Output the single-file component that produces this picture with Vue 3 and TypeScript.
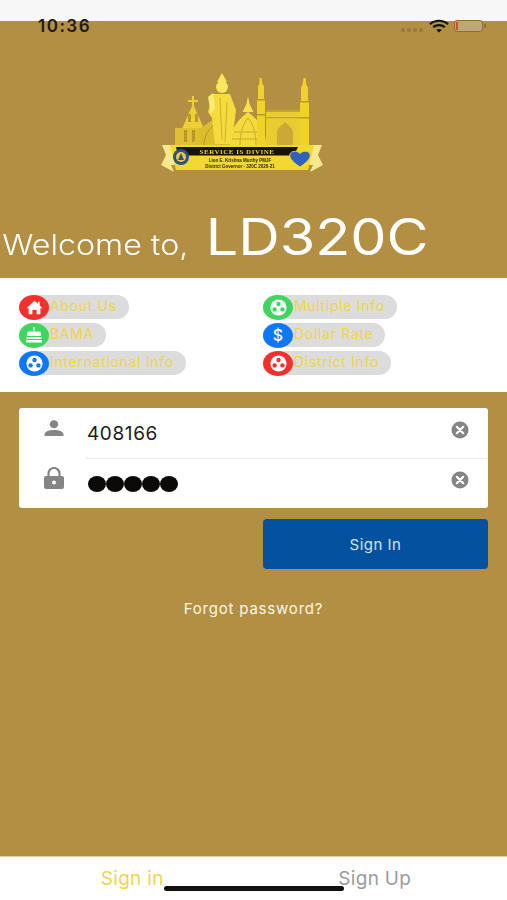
<template>
  <div class="screen">
    <div class="status-strip"></div>

    <!-- status bar sits over the strip and the gold header -->
    <div class="status-bar">
      <span class="time">10:36</span>
      <div class="status-icons">
        <div class="signal"><i v-for="n in 4" :key="n"></i></div>
        <svg class="wifi" viewBox="0 0 20 14" width="20" height="14">
          <path d="M1 5.200C6 .6 14 .6 19 5.200" fill="none" stroke="#111" stroke-width="2.200" />
          <path d="M4.200 8.200c3.300-2.900 8.300-2.900 11.600 0" fill="none" stroke="#111" stroke-width="2.200" />
          <path d="M7.200 10.800c1.600-1.200 4-1.200 5.600 0L10 13.600z" fill="#111" />
        </svg>
        <div class="battery"><b></b></div>
        <div class="battery-cap"></div>
      </div>
    </div>

    <header class="hero">
      <svg class="logo" viewBox="0 0 200 130" width="200" height="130">
        <g fill="#f0d32a">
          <!-- left church -->
          <path d="M52 36h2v4h4v2h-4v4l14 32H38l14-32v-4h-4v-2h4z" fill="#ecd035" />
          <path d="M35 86V68h34v18z" fill="#dfc030" />
          <path d="M48 54h3v8h-3zM55 54h3v8h-3zM44 70h3v12h-3zM52 70h3v12h-3z" fill="#b8982c" />
          <!-- right mosque -->
          <path d="M126 50h36v36h-36z" fill="#e9cc30" />
          <path d="M126 50h36v2h-36zM126 57h36v1.200h-36z" fill="#c2a42c" />
          <path d="M137 86V73c0-5 5-8 8-11 3 3 8 6 8 11v13z" fill="#b8913f" opacity=".6" />
          <!-- domes -->
          <path d="M54 86c0-13 8-20 19-26 11 6 19 13 19 26z" fill="#dcbd2c" />
          <path d="M64 86c0-10 4-16 9-20M82 86c0-10-4-16-9-20" fill="none" stroke="#b39429" />
          <path d="M90 86c0-18 8-26 18-34 10 8 18 16 18 34z" fill="#f4da3a" />
          <path d="M100 86c0-14 3-22 8-28M116 86c0-14-3-22-8-28M94 72h28M92 79h32" fill="none" stroke="#c9aa2c" />
          <path d="M108 36l1.500 8 4 8h-11l4-8z" fill="#f7e34f" />
          <!-- statue -->
          <circle cx="82" cy="27" r="6" fill="#f9e75c" />
          <path d="M77 22l5-9 5 9z" fill="#f9e75c" />
          <path d="M73 34h17l6 16-2 16-3 18H75l-3-26-4-6z" fill="#f5dc3c" />
          <path d="M68 37l5-4 2 14-4 8z" fill="#fbec74" />
          <path d="M80 38l2 42M87 42l-2 40" fill="none" stroke="#cdae2c" />
          <!-- minarets -->
          <path d="M119.500 18h2l1 6 1.500 2v12l1 2v46h-8V40l1-2V26l1.500-2z" />
          <path d="M117 39h8v1.500h-8zM117 54h8v1.500h-8z" fill="#b8982c" />
          <path d="M163.500 18h2l1 7 1.500 2v13l1 2v44h-9V42l1-2V27l1.500-2z" />
          <path d="M160 41h9v1.500h-9zM160 57h9v1.500h-9z" fill="#b8982c" />
        </g>
        <!-- banner -->
        <path d="M22 85l13 0v20H31l3 7-13-7 5-10z" fill="#f7e88c" />
        <path d="M182 85l-13 0v20h4l-3 7 13-7-5-10z" fill="#f7e88c" />
        <path d="M30 85h144l-6 25H36z" fill="#f3d92f" />
        <path d="M36 87h122l-4 8.500H38z" fill="#17130a" />
        <text x="97" y="94" class="banner-title" text-anchor="middle">SERVICE IS DIVINE</text>
        <text x="100" y="101.500" class="banner-sub" text-anchor="middle">Lion E. Krishna Murthy PMJF</text>
        <text x="100" y="108" class="banner-sub" text-anchor="middle">District Governor · 320C 2020-21</text>
        <circle cx="41" cy="97" r="8" fill="#2c4f8f" />
        <circle cx="41" cy="97" r="5" fill="#e8cd3a" />
        <path d="M41 93l3 7h-6z" fill="#2c4f8f" />
        <path d="M160 107c-9-6-11-10-10-13 1-3 7-4 10-.5 3-3.500 9-2.500 10 .5 1 3-1 7-10 13z" fill="#2f62b8" stroke="#e8cd3a" />
      </svg>
      <h1 class="welcome">
        <span class="welcome-to">Welcome to,</span>
        <span class="welcome-name">LD320C</span>
      </h1>
    </header>

    <section class="links">
      <div v-for="link in links" :key="link.label" class="pill">
        <span class="pill-icon" :class="link.color">
          <svg v-if="link.icon === 'home'" viewBox="0 0 20 20" width="19" height="19">
            <path d="M10 3l3.500 3V4h2v4l3 2.800h-2.300V17h-4v-4.500H7.800V17h-4v-6.200H1.500z" fill="#fff" />
          </svg>
          <svg v-else-if="link.icon === 'cake'" viewBox="0 0 20 20" width="20" height="20">
            <path d="M9.200 2h1.600v3.500h-1.600z" fill="#fff" />
            <path d="M5 6.500h10a2 2 0 0 1 2 2V11H3V8.500a2 2 0 0 1 2-2z" fill="#fff" />
            <path d="M2.500 12h15v2H2.500zM2 15h16v2.500H2z" fill="#fff" />
          </svg>
          <span v-else-if="link.icon === 'dollar'" class="dollar">$</span>
          <svg v-else viewBox="0 0 20 20" width="19" height="19">
            <circle cx="10" cy="10" r="8.500" fill="#fff" />
            <circle cx="10" cy="6.300" r="2.300" :class="'dot-' + link.color" />
            <circle cx="5.900" cy="12" r="2.300" :class="'dot-' + link.color" />
            <circle cx="14.100" cy="12" r="2.300" :class="'dot-' + link.color" />
          </svg>
        </span>
        <span class="pill-text">{{ link.label }}</span>
      </div>
    </section>

    <main class="body">
      <form class="card" @submit.prevent>
        <div class="field">
          <svg class="field-icon" viewBox="0 0 22 18" width="22" height="17">
            <ellipse cx="11" cy="4.500" rx="4.500" ry="4.300" fill="#858585" />
            <path d="M1 17v-2C1 12 6 10.500 11 10.500S21 12 21 15v2z" fill="#858585" />
          </svg>
          <span class="field-value">408166</span>
          <svg class="clear" viewBox="0 0 18 18" width="18" height="18">
            <circle cx="9" cy="9" r="8.500" fill="#858585" />
            <path d="M5.800 5.800l6.400 6.400M12.200 5.800l-6.400 6.400" stroke="#fff" stroke-width="2.200" stroke-linecap="round" />
          </svg>
        </div>
        <div class="field field-second">
          <svg class="field-icon lock" viewBox="0 0 22 22" width="22" height="22">
            <path d="M5.500 10V6.500a5.500 5.500 0 0 1 11 0V10" fill="none" stroke="#858585" stroke-width="2.200" />
            <rect x="1" y="9" width="20" height="13" rx="2" fill="#858585" />
            <circle cx="11" cy="15.500" r="2" fill="#fff" />
          </svg>
          <span class="field-value dots"><i v-for="n in 5" :key="n"></i></span>
          <svg class="clear" viewBox="0 0 18 18" width="18" height="18">
            <circle cx="9" cy="9" r="8.500" fill="#858585" />
            <path d="M5.800 5.800l6.400 6.400M12.200 5.800l-6.400 6.400" stroke="#fff" stroke-width="2.200" stroke-linecap="round" />
          </svg>
        </div>
      </form>

      <div class="actions">
        <button class="sign-in" type="button">Sign In</button>
      </div>
      <p class="forgot">Forgot password?</p>
    </main>

    <nav class="tabs">
      <span class="tab active">Sign in</span>
      <span class="tab">Sign Up</span>
    </nav>
    <div class="home-indicator"></div>
  </div>
</template>

<script setup lang="ts">
interface LinkItem {
  label: string;
  icon: "home" | "cake" | "dots" | "dollar";
  color: "red" | "green" | "blue";
}

const links: LinkItem[] = [
  { label: "About Us", icon: "home", color: "red" },
  { label: "Multiple Info", icon: "dots", color: "green" },
  { label: "BAMA", icon: "cake", color: "green" },
  { label: "Dollar Rate", icon: "dollar", color: "blue" },
  { label: "International Info", icon: "dots", color: "blue" },
  { label: "District Info", icon: "dots", color: "red" },
];
</script>

<style>
html,
body {
  margin: 0;
  background: #fff;
}
</style>

<style scoped>
.screen {
  position: relative;
  width: 507px;
  height: 900px;
  display: flex;
  flex-direction: column;
  overflow: hidden;
  font-family: Inter, "Liberation Sans", sans-serif;
  background: #b28f42;
}

.status-strip {
  height: 21px;
  flex: none;
  background: #f7f7f8;
}

.status-bar {
  position: absolute;
  top: 17px;
  left: 38px;
  right: 21px;
  height: 18px;
  display: flex;
  align-items: center;
  justify-content: space-between;
}

.time {
  font-size: 17px;
  font-weight: 600;
  letter-spacing: 1.500px;
  color: #1d1a12;
}

.status-icons {
  display: flex;
  align-items: center;
}

.signal {
  display: flex;
  gap: 2px;
  margin: 8px 6px 0 0;
}

.signal i {
  width: 4px;
  height: 4px;
  border-radius: 50%;
  background: #97783a;
}

.wifi {
  margin-right: 5px;
}

.battery {
  width: 29px;
  height: 12px;
  box-sizing: border-box;
  border: 1.5px solid #8f6f31;
  border-radius: 3px;
  background: #bda678;
  padding: 1px;
}

.battery b {
  display: block;
  width: 2px;
  height: 100%;
  background: #e8432a;
}

.battery-cap {
  width: 2px;
  height: 4px;
  margin-left: 1px;
  background: #8f6f31;
}

.hero {
  height: 257px;
  flex: none;
  display: flex;
  flex-direction: column;
  align-items: center;
  background: #b28f42;
}

.logo {
  flex: none;
  margin-top: 39px;
  margin-left: -27px;
  filter: blur(0.5px);
}

.banner-title {
  font-family: "Liberation Serif", serif;
  font-size: 7px;
  font-weight: 700;
  letter-spacing: 0.5px;
  fill: #f0d32a;
}

.banner-sub {
  font-family: "Liberation Sans", sans-serif;
  font-size: 4.500px;
  font-weight: 700;
  fill: #2a2410;
}

/* the source app stretches this headline sideways */
.welcome {
  margin: 17px 0 0;
  width: 100%;
  display: flex;
  align-items: baseline;
  padding-left: 2px;
  box-sizing: border-box;
  font-weight: 300;
  color: #fff;
  white-space: nowrap;
  transform: scaleX(1.15);
  transform-origin: left center;
}

.welcome-to {
  font-size: 28px;
}

.welcome-name {
  font-size: 50px;
  font-weight: 400;
  margin-left: 15px;
}

.links {
  height: 114px;
  flex: none;
  box-sizing: border-box;
  padding: 17px 0 0 19px;
  display: grid;
  grid-template-columns: 244px 1fr;
  grid-auto-rows: 24px;
  row-gap: 4px;
  justify-items: start;
  background: #fff;
}

.pill {
  height: 24px;
  display: flex;
  align-items: center;
  border-radius: 12px;
  background: #dcdcdc;
  padding-right: 12px;
}

.pill-icon {
  width: 30px;
  height: 25px;
  flex: none;
  display: flex;
  align-items: center;
  justify-content: center;
  border-radius: 50%;
  margin-right: 1px;
}

.red {
  background: #f4302c;
}

.green {
  background: #3fd65f;
}

.blue {
  background: #0f77f5;
}

.dot-red {
  fill: #f4302c;
}

.dot-green {
  fill: #3fd65f;
}

.dot-blue {
  fill: #0f77f5;
}

.dollar {
  color: #fff;
  font-size: 16px;
  font-weight: 500;
  line-height: 1;
}

.pill-text {
  font-size: 14px;
  line-height: 20px;
  margin-top: -2px;
  letter-spacing: 0.7px;
  color: #efd549;
  white-space: nowrap;
}

.body {
  flex: 1;
  box-sizing: border-box;
  padding: 16px 19px 0;
  display: flex;
  flex-direction: column;
}

.card {
  height: 100px;
  flex: none;
  border-radius: 3px;
  background: #fff;
}

.field {
  position: relative;
  height: 50px;
  display: flex;
  align-items: center;
  padding-right: 19px;
}

.field-second::before {
  content: "";
  position: absolute;
  top: 0;
  left: 67px;
  right: 0;
  height: 1px;
  background: #ececec;
}

.field-icon {
  flex: none;
  margin: -10px 0 0 24px;
}

.lock {
  margin-top: -11px;
}

.field-value {
  flex: 1;
  margin-left: 22px;
  font-size: 19px;
  letter-spacing: 0.6px;
  color: #1b1b1b;
}

.dots {
  display: flex;
  margin-left: 23px;
  margin-top: 2px;
}

.dots i {
  width: 18px;
  height: 16px;
  border-radius: 50%;
  background: #0c0a08;
}

.clear {
  flex: none;
  margin-top: -6px;
}

.actions {
  margin-top: 11px;
  display: flex;
  justify-content: flex-end;
}

.sign-in {
  width: 225px;
  height: 50px;
  border: 0;
  border-radius: 4px;
  background: #04529f;
  color: #d4e2f1;
  font-family: inherit;
  font-size: 15px;
  letter-spacing: 0.5px;
}

.forgot {
  margin: 30px 0 0;
  text-align: center;
  font-size: 15px;
  letter-spacing: 0.8px;
  color: #fbf7ea;
}

.tabs {
  height: 44px;
  flex: none;
  box-sizing: border-box;
  padding: 10px 11px 0;
  display: grid;
  grid-template-columns: 1fr 1fr;
  justify-items: center;
  align-items: start;
  border-top: 1px solid #e2cfa3;
  background: #fff;
}

.tab {
  font-size: 19px;
  letter-spacing: 0.3px;
  color: #9b9b9b;
}

.tab.active {
  color: #f2d44e;
}

.home-indicator {
  position: absolute;
  left: 164px;
  top: 886px;
  width: 180px;
  height: 5px;
  border-radius: 3px;
  background: #111;
}
</style>
